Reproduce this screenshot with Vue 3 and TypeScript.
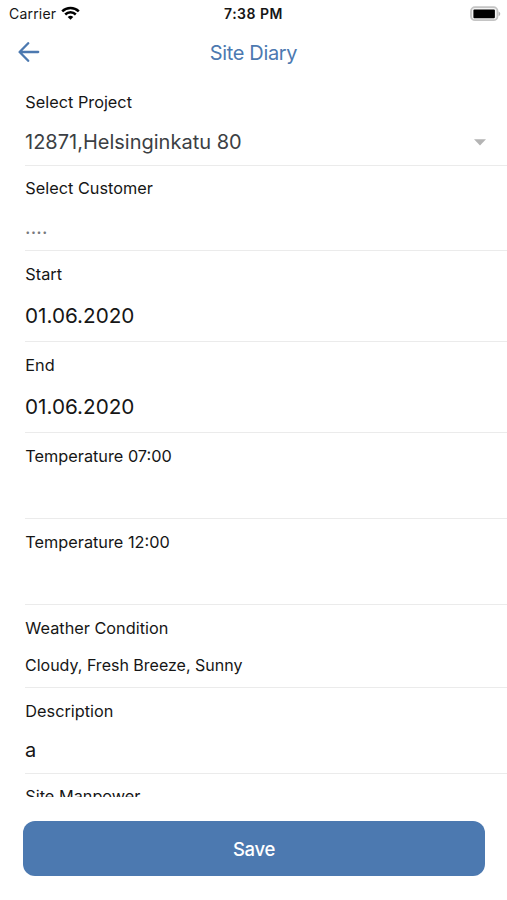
<script setup lang="ts">
interface Field {
  label: string
  value: string
  kind: 'select' | 'placeholder' | 'date' | 'empty' | 'weather' | 'note' | 'last'
}

const fields: Field[] = [
  { label: 'Select Project', value: '12871,Helsinginkatu 80', kind: 'select' },
  { label: 'Select Customer', value: '....', kind: 'placeholder' },
  { label: 'Start', value: '01.06.2020', kind: 'date' },
  { label: 'End', value: '01.06.2020', kind: 'date' },
  { label: 'Temperature 07:00', value: '', kind: 'empty' },
  { label: 'Temperature 12:00', value: '', kind: 'empty' },
  { label: 'Weather Condition', value: 'Cloudy, Fresh Breeze, Sunny', kind: 'weather' },
  { label: 'Description', value: 'a', kind: 'note' },
  { label: 'Site Manpower', value: '', kind: 'last' },
]
</script>

<template>
  <div class="screen">
    <div class="status">
      <div class="carrier">
        <span>Carrier</span>
        <svg class="wifi" width="19" height="14" viewBox="0 0 19 14" fill="none" stroke="#000" stroke-width="2.5">
          <path d="M1.2 5.3a11.8 11.8 0 0 1 16.6 0" />
          <path d="M4.2 8.5a7.5 7.5 0 0 1 10.6 0" />
          <path d="M9.5 13.8 6.7 11a4 4 0 0 1 5.6 0Z" fill="#000" stroke="none" />
        </svg>
      </div>
      <span class="time">7:38 PM</span>
      <svg class="battery" width="31" height="16" viewBox="0 0 31 16">
        <rect x="1" y="1.2" width="26.5" height="13" rx="4" fill="#f4f4f4" stroke="#c4c4c4" stroke-width="1.8" />
        <rect x="3.4" y="3.4" width="21.5" height="8.8" rx="1" fill="#000" />
        <path d="M28.6 5.4c2.2.8 2.2 3.9 0 4.7Z" fill="#b4b4b4" />
      </svg>
    </div>
    <header class="nav">
      <button class="back" aria-label="Back">
        <svg width="22" height="20" viewBox="0 0 22 20" fill="none" stroke="#4c79b0" stroke-width="2.3" stroke-linecap="round" stroke-linejoin="round">
          <path d="M10.2 1.2 1.6 10l8.6 8.8M1.8 10h18.4" />
        </svg>
      </button>
      <h1 class="title">Site Diary</h1>
    </header>
    <main class="form">
      <section v-for="field in fields" :key="field.label" class="field" :class="field.kind">
        <div class="label">{{ field.label }}</div>
        <div class="value">
          <span>{{ field.value }}</span>
          <svg v-if="field.kind === 'select'" class="caret" width="12" height="7" viewBox="0 0 12 7">
            <path d="M0 .3h12L6 6.5Z" fill="#b4b4b4" />
          </svg>
        </div>
      </section>
    </main>
    <footer class="footer">
      <button class="save">Save</button>
    </footer>
  </div>
</template>

<style>
body {
  background: #fff;
}
</style>

<style scoped>
.screen {
  display: flex;
  flex-direction: column;
  box-sizing: border-box;
  height: 900px;
  background: #fff;
  color: #161616;
  font-family: Inter, "Liberation Sans", sans-serif;
  overflow: hidden;
}
.status {
  display: grid;
  grid-template-columns: 1fr auto 1fr;
  align-items: center;
  height: 27px;
  padding: 0 6px 0 9px;
}
.carrier {
  display: flex;
  align-items: center;
  gap: 5px;
  font-size: 14px;
  letter-spacing: 0.2px;
}
.wifi {
  margin-top: -2px;
}
.time {
  margin-right: 3px;
  font-size: 14px;
  font-weight: 600;
  letter-spacing: 0.5px;
}
.battery {
  justify-self: end;
}
.nav {
  display: grid;
  box-sizing: border-box;
  grid-template-columns: 60px 1fr 60px;
  align-items: center;
  height: 52px;
  padding-bottom: 2px;
}
button {
  border: 0;
  font-family: inherit;
}
.back {
  display: flex;
  padding: 0 0 0 18px;
  background: none;
}
.title {
  margin: 0;
  padding-top: 2px;
  text-align: center;
  font-size: 20px;
  font-weight: 400;
  letter-spacing: -0.35px;
  color: #4c79b0;
}
.form {
  flex: none;
  height: 718px;
  padding-left: 25px;
  overflow: hidden;
}
.field {
  box-sizing: border-box;
  height: 86px;
  padding-top: 13px;
  border-bottom: 1px solid #ebebeb;
}
.label {
  padding-left: 0.3px;
  font-size: 16.3px;
  line-height: 20px;
}
.value {
  display: flex;
  align-items: center;
  justify-content: space-between;
  height: 58px;
  padding-right: 21px;
  font-size: 20px;
}
.select {
  height: 87px;
}
.select .value {
  height: 60px;
  color: #3c3f44;
}
.placeholder {
  height: 85px;
  padding-top: 12px;
}
.placeholder .value {
  font-size: 19px;
  letter-spacing: 0.2px;
  color: #77797d;
}
.date {
  height: 91px;
}
.date .value {
  height: 63px;
  font-size: 20.7px;
}
.weather {
  height: 83px;
}
.weather .value {
  height: 54px;
  font-size: 16px;
}
.last {
  padding-top: 12px;
}
.footer {
  padding: 24px 22px 0 23px;
}
.save {
  display: block;
  width: 100%;
  height: 55px;
  padding: 0;
  border-radius: 12px;
  background: #4c79b0;
  color: #fff;
  font-size: 18.5px;
  font-weight: 500;
  letter-spacing: -0.3px;
}
</style>
